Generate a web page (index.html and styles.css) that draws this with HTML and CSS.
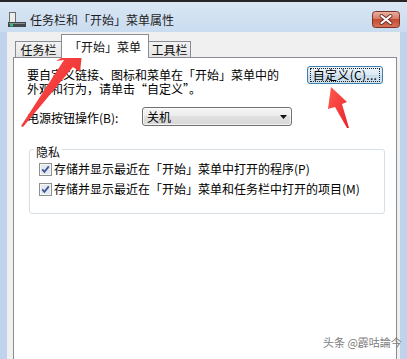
FILE: index.html
```html
<!DOCTYPE html>
<html lang="zh-CN">
<head>
    <meta charset="UTF-8">
    <title>任务栏和「开始」菜单属性</title>
    <link rel="stylesheet" href="styles.css">
</head>
<body>
    <div class="window">
        <header class="titlebar">
            <svg class="app-icon" width="18" height="16" viewBox="0 0 18 16">
                <rect x="1.5" y="0.5" width="6" height="10" fill="#ececec" stroke="#6d6d6d"/>
                <rect x="0" y="10" width="18" height="5" fill="#44474c"/>
                <rect x="1" y="11" width="16" height="1" fill="#8a8d92"/>
                <rect x="2" y="11.5" width="3" height="3" fill="#3dba7c"/>
            </svg>
            <span class="title">任务栏和「开始」菜单属性</span>
            <button class="close-btn" aria-label="关闭">
                <svg width="28" height="17" viewBox="0 0 28 17">
                    <defs>
                        <linearGradient id="closeFill" x1="0" y1="0" x2="0" y2="1">
                            <stop offset="0" stop-color="#eab3a6"/>
                            <stop offset="0.45" stop-color="#d77b66"/>
                            <stop offset="0.5" stop-color="#c44a34"/>
                            <stop offset="1" stop-color="#d9755a"/>
                        </linearGradient>
                    </defs>
                    <rect x="0.5" y="0.5" width="27" height="16" rx="3" fill="url(#closeFill)" stroke="#7d3226"/>
                    <path d="M9.5 5 L18.5 12 M18.5 5 L9.5 12" stroke="#6a2e24" stroke-width="4" stroke-linecap="round"/>
                    <path d="M9.5 5 L18.5 12 M18.5 5 L9.5 12" stroke="#ffffff" stroke-width="2.2" stroke-linecap="round"/>
                </svg>
            </button>
        </header>

        <div class="client">
            <div class="tabs">
                <div class="tab tab-taskbar">任务栏</div>
                <div class="tab tab-start active">「开始」菜单</div>
                <div class="tab tab-toolbar">工具栏</div>
            </div>

            <div class="panel">
                <div class="intro-row">
                    <p class="intro">要自定义链接、图标和菜单在「开始」菜单中的<br>外观和行为，请单击“自定义”。</p>
                    <button class="btn"><span class="focus-ring">自定义(C)...</span></button>
                </div>

                <div class="power-row">
                    <span class="power-label">电源按钮操作(B):</span>
                    <div class="select">
                        <span>关机</span>
                        <svg width="7" height="4" viewBox="0 0 7 4"><path d="M0 0 H7 L3.5 4 Z" fill="#111"/></svg>
                    </div>
                </div>

                <fieldset class="group">
                    <legend>隐私</legend>
                    <div class="check-row">
                        <svg class="check-box" width="13" height="13" viewBox="0 0 13 13">
                            <rect x="0.5" y="0.5" width="12" height="12" fill="#f6f6f6" stroke="#8e8f8f"/>
                            <rect x="2" y="2" width="9" height="9" fill="#e4e9f0"/>
                            <path d="M3.2 6.4 L5.4 8.8 L9.8 3.4" fill="none" stroke="#3f569a" stroke-width="1.8"/>
                        </svg>
                        <span>存储并显示最近在「开始」菜单中打开的程序(P)</span>
                    </div>
                    <div class="check-row">
                        <svg class="check-box" width="13" height="13" viewBox="0 0 13 13">
                            <rect x="0.5" y="0.5" width="12" height="12" fill="#f6f6f6" stroke="#8e8f8f"/>
                            <rect x="2" y="2" width="9" height="9" fill="#e4e9f0"/>
                            <path d="M3.2 6.4 L5.4 8.8 L9.8 3.4" fill="none" stroke="#3f569a" stroke-width="1.8"/>
                        </svg>
                        <span>存储并显示最近在「开始」菜单和任务栏中打开的项目(M)</span>
                    </div>
                </fieldset>
            </div>
        </div>

        <div class="watermark">头条 @霹咕論今</div>

        <!-- red annotation arrows drawn over the dialog -->
        <svg class="arrows" width="407" height="359" viewBox="0 0 407 359">
            <defs>
                <linearGradient id="arrowFill" x1="0" y1="0" x2="1" y2="1">
                    <stop offset="0" stop-color="#ff5a50"/>
                    <stop offset="1" stop-color="#e8232a"/>
                </linearGradient>
            </defs>
            <polygon points="83,45 80,72 73,67 23,127 21,126 64,60 56,61" fill="url(#arrowFill)"/>
            <polygon points="331,87 347,102 342,104 349,128 347,128 335,107 328,109" fill="url(#arrowFill)"/>
        </svg>
    </div>
</body>
</html>
```

FILE: styles.css
```css
body {
    margin: 0;
    font-family: "Noto Sans CJK SC", "Liberation Sans", sans-serif;
    font-size: 12px;
    line-height: 14px;
    color: #000;
}
.window {
    position: relative;
    width: 407px;
    height: 359px;
    box-sizing: border-box;
    border-top: 2px solid #262626;
    background-color: #bfd4ec;
    display: flex;
    flex-direction: column;
    overflow: hidden;
}
.titlebar {
    height: 30px;
    box-sizing: border-box;
    padding: 5px 7px 0 8px;
    display: flex;
    align-items: center;
    background: linear-gradient(#d9e6f3, #cadcf0);
}
.app-icon {
    display: block;
    margin-right: 4px;
}
.title {
    color: #1e1e1e;
}
.close-btn {
    margin-left: auto;
    padding: 0;
    border: none;
    background: none;
    display: block;
    height: 17px;
}
.close-btn svg {
    display: block;
}
.client {
    flex: 1;
    margin: 0 7px;
    padding: 2px 3px 0 6px;
    background-color: #f0f0f0;
    display: flex;
    flex-direction: column;
}
.tabs {
    display: flex;
    align-items: flex-end;
    padding-left: 2px;
    margin-bottom: -1px;
    position: relative;
    z-index: 1;
}
.tab {
    box-sizing: border-box;
    height: 16px;
    margin-bottom: 1px;
    padding-top: 1px;
    border: 1px solid #898c95;
    border-bottom: none;
    background: linear-gradient(#f3f3f3, #e4e4e4);
    text-align: center;
    color: #111;
}
.tab + .tab {
    margin-left: -1px;
}
.tab-taskbar {
    width: 47px;
}
.tab-start {
    width: 88px;
}
.tab-toolbar {
    width: 43px;
}
.tab.active {
    height: 24px;
    margin-bottom: 0;
    padding-top: 5px;
    background: #fff;
    position: relative;
    z-index: 2;
}
.panel {
    flex: 1;
    background-color: #fff;
    border: 1px solid #898c95;
    border-bottom: none;
    padding: 8px 13px 0 13px;
}
.intro-row {
    display: flex;
    align-items: flex-start;
}
.intro {
    margin: 0;
    padding-top: 2px;
    line-height: 14px;
}
.btn {
    margin-left: auto;
    width: 76px;
    height: 18px;
    padding: 1px 2px;
    box-sizing: border-box;
    border: 1px solid #3c7fb1;
    border-radius: 3px;
    background: linear-gradient(#edf5fb, #dbe9f4 50%, #c8dcec 50%, #d2e3f0);
    font: inherit;
    line-height: 12px;
    color: #000;
    display: flex;
}
.focus-ring {
    flex: 1;
    border: 1px dotted #222;
    text-align: center;
    white-space: nowrap;
    letter-spacing: 0.3px;
}
.power-row {
    margin-top: 11px;
    display: flex;
    align-items: center;
}
.power-label {
    width: 115px;
    padding-top: 2px;
}
.select {
    width: 150px;
    height: 19px;
    box-sizing: border-box;
    padding: 0 4px 0 4px;
    border: 1px solid #707070;
    border-radius: 3px;
    background: linear-gradient(#f4f4f4, #ececec 50%, #e0e0e0 50%, #d8d8d8);
    box-shadow: inset 0 0 0 1px rgba(255, 255, 255, 0.7);
    display: flex;
    align-items: center;
    justify-content: space-between;
}
.select svg {
    display: block;
}
.group {
    margin: 14px -2px 0 2px;
    padding: 0 4px 14px 4px;
    border: 1px solid #d5dfe5;
    border-radius: 3px;
    min-width: 0;
}
.group legend {
    padding: 5px 2px 0 2px;
    line-height: 14px;
    color: #111;
}
.check-row {
    display: flex;
    align-items: center;
    height: 20px;
    margin-left: 5px;
}
.check-box {
    display: block;
    margin-right: 2px;
    flex-shrink: 0;
}
.watermark {
    position: absolute;
    left: 323px;
    top: 334px;
    font-size: 11px;
    line-height: 13px;
    color: #7c7c7c;
    white-space: nowrap;
}
.arrows {
    position: absolute;
    left: 0;
    top: -2px;
    pointer-events: none;
}
```
